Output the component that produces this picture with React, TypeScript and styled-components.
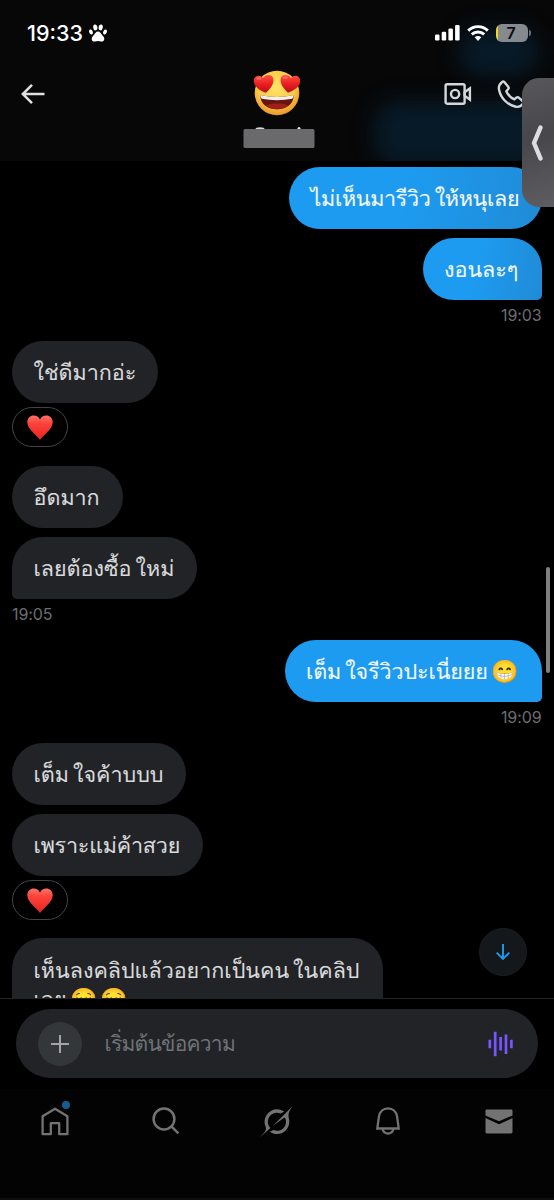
import React from "react";
import styled, { createGlobalStyle } from "styled-components";

const GlobalStyle = createGlobalStyle`
  * { box-sizing: border-box; }
  body { margin: 0; background: #000; }
  svg { display: block; flex: none; }
`;

const Screen = styled.div`
  position: relative;
  width: 554px;
  height: 1200px;
  display: flex;
  flex-direction: column;
  overflow: hidden;
  background: #000;
  color: #fff;
  font-family: Inter, "Liberation Sans", sans-serif;
`;

const Header = styled.header`
  position: relative;
  height: 161px;
  flex: none;
  background: #070708;
  overflow: hidden;
`;

const Glow = styled.div<{ $x: number; $y: number; $w: number; $h: number }>`
  position: absolute;
  left: ${(p) => p.$x}px;
  top: ${(p) => p.$y}px;
  width: ${(p) => p.$w}px;
  height: ${(p) => p.$h}px;
  border-radius: 24px;
  background: #071a27;
  filter: blur(10px);
`;

const StatusBar = styled.div`
  position: relative;
  display: flex;
  align-items: center;
  justify-content: space-between;
  height: 66px;
  padding: 0 23px 0 27px;
`;

const StatusGroup = styled.div<{ $gap: number }>`
  display: flex;
  align-items: center;
  gap: ${(p) => p.$gap}px;
`;

const Clock = styled.span`
  font-size: 21.5px;
  font-weight: 550;
  line-height: 26px;
`;

const Battery = styled.div`
  display: flex;
  align-items: center;
  gap: 1px;
`;

const BatteryBody = styled.div`
  width: 32px;
  height: 18px;
  border-radius: 6px;
  background: linear-gradient(90deg, #f2d71b 2.5px, #858a8e 2.5px);
  color: #0a0d10;
  font-size: 16px;
  font-weight: 600;
  line-height: 18px;
  padding-right: 2px;
  text-align: center;
`;

const BatteryTip = styled.div`
  width: 2px;
  height: 6px;
  border-radius: 0 2px 2px 0;
  background: #6a7176;
`;

const TitleBar = styled.div`
  position: relative;
  display: grid;
  grid-template-columns: 1fr 72px 1fr;
  height: 90px;
`;

const BackArea = styled.div`
  padding: 17px 0 0 20px;
`;

const Contact = styled.div`
  display: flex;
  flex-direction: column;
  align-items: center;
  gap: 10px;
  padding-top: 4px;
`;

const HeaderActions = styled.div`
  display: flex;
  align-items: center;
  justify-content: flex-end;
  height: 30px;
  gap: 25px;
  margin-top: 13px;
  padding-right: 28px;
`;

const Thread = styled.main`
  flex: none;
  height: 837px;
  overflow: hidden;
  display: flex;
  flex-direction: column;
  padding: 5.5px 12.5px 0 12px;
`;

const Group = styled.section<{ $mine?: boolean; $after?: number }>`
  flex: none;
  display: flex;
  flex-direction: column;
  align-items: ${(p) => (p.$mine ? "flex-end" : "flex-start")};
  gap: 8.5px;
  margin-bottom: ${(p) => p.$after ?? 0}px;
`;

const Bubble = styled.div<{ $mine?: boolean; $tail?: boolean; $w: number; $ls?: number; $shade?: boolean }>`
  width: ${(p) => p.$w}px;
  min-height: 62.5px;
  padding: 17.5px 0 16px 21.5px;
  border-radius: 31px;
  ${(p) => p.$tail && (p.$mine ? "border-bottom-right-radius: 5px;" : "border-bottom-left-radius: 5px;")}
  background: ${(p) => (p.$mine ? (p.$shade ? "linear-gradient(100deg, #1d9bf0 45%, #208bd6)" : "#1d9bf0") : "#212327")};
  color: ${(p) => (p.$mine ? "#f3f8fc" : "#d9dadb")};
  font-family: Loma, "Noto Sans", sans-serif;
  font-size: 21.5px;
  line-height: 29px;
  letter-spacing: ${(p) => p.$ls ?? 0}px;
  -webkit-text-stroke: 0.1px currentColor;
  white-space: nowrap;
`;

const Spaced = styled.span`
  margin-left: 4px;
`;

const Emoji = styled.span`
  font-size: 22px;
  line-height: 20px;
  letter-spacing: 3.5px;
  margin-left: 3px;
`;

const Time = styled.time`
  margin-top: -2px;
  color: #6b6e72;
  font-size: 16px;
  line-height: 16px;
  letter-spacing: -0.1px;
`;

const Reaction = styled.div`
  display: flex;
  align-items: center;
  justify-content: center;
  width: 56px;
  height: 40px;
  margin-top: -5px;
  padding-top: 1px;
  border: 1px solid #424447;
  border-radius: 20px;
`;

const ComposerArea = styled.footer`
  flex: none;
  height: 91px;
  padding: 10px 16px 0;
  border-top: 1px solid #222325;
`;

const Composer = styled.div`
  display: flex;
  align-items: center;
  height: 69px;
  padding: 0 24px 0 21.5px;
  border-radius: 35px;
  background: #212327;
`;

const AddButton = styled.div`
  display: flex;
  align-items: center;
  justify-content: center;
  width: 44px;
  height: 44px;
  border-radius: 50%;
  background: #33373a;
`;

const Placeholder = styled.span`
  flex: 1;
  padding-left: 23px;
  color: #707377;
  font-family: Loma, "Noto Sans", sans-serif;
  font-size: 21px;
  letter-spacing: -0.75px;
  line-height: 31px;
`;

const NavBar = styled.nav`
  flex: 1;
  display: grid;
  grid-template-columns: repeat(5, 1fr);
  justify-items: center;
  align-items: start;
  padding-top: 16px;
  background: #030303;
  border-bottom: 2px solid #0e0e0e;
`;

const NavItem = styled.div`
  position: relative;
  display: flex;
  align-items: center;
  height: 32px;
`;

const UnreadDot = styled.i`
  position: absolute;
  top: -4px;
  right: -1px;
  width: 8px;
  height: 8px;
  border-radius: 50%;
  background: #145d90;
`;

const JumpButton = styled.div`
  position: absolute;
  left: 479px;
  top: 928px;
  width: 48px;
  height: 48px;
  display: flex;
  align-items: center;
  justify-content: center;
  border-radius: 50%;
  border: 1px solid #1b1e20;
  background: #15181a;
`;

const ScrollThumb = styled.div`
  position: absolute;
  left: 546px;
  top: 567px;
  width: 4px;
  height: 106px;
  border-radius: 2px;
  background: #7f7f7f;
`;

const SideHandle = styled.div`
  position: absolute;
  left: 522px;
  top: 78px;
  width: 32px;
  height: 129px;
  display: flex;
  align-items: center;
  padding-left: 8px;
  border-radius: 17px 0 0 17px;
  background: linear-gradient(165deg, #58585b, #47464a 45%, #5e5d61);
`;

const Paw = () => (
  <svg width="18" height="18" viewBox="0 0 18 18" fill="#fff">
    <ellipse cx="6.3" cy="3.4" rx="2.1" ry="3" transform="rotate(-8 6.3 3.4)" />
    <ellipse cx="11.7" cy="3.4" rx="2.1" ry="3" transform="rotate(8 11.7 3.4)" />
    <ellipse cx="2" cy="8" rx="1.8" ry="2.6" transform="rotate(-20 2 8)" />
    <ellipse cx="16" cy="8" rx="1.8" ry="2.6" transform="rotate(20 16 8)" />
    <path d="M9 7.4c2.1 0 3 1.9 4 3.400 1 1.400 2.400 2.200 2.300 4.200-.1 1.900-1.700 2.800-3.300 2.500-1-.2-1.900-.5-3-.5s-2 .3-3 .5c-1.600.3-3.200-.6-3.300-2.500-.1-2 1.300-2.800 2.300-4.200 1-1.500 1.900-3.400 4-3.400z" />
  </svg>
);

const Signal = () => (
  <svg width="25" height="16" viewBox="0 0 25 16" fill="#fff">
    <rect x="0" y="9.5" width="4.5" height="6" rx="1.2" />
    <rect x="6.7" y="6.8" width="4.5" height="8.7" rx="1.2" />
    <rect x="13.4" y="3.5" width="4.5" height="12" rx="1.2" />
    <rect x="20.1" y="0" width="4.5" height="15.5" rx="1.2" />
  </svg>
);

const Wifi = () => (
  <svg width="22" height="16" viewBox="0 0 22 16" fill="none" stroke="#fff" strokeWidth="2.9">
    <path d="M1.200 5.600C6.700.3 15.300.3 20.800 5.600" />
    <path d="M4.800 9.400c3.500-3.200 8.900-3.200 12.400 0" />
    <path d="M7.700 12.300c1.900-1.600 4.700-1.600 6.600 0L11 15.900z" fill="#fff" stroke="none" />
  </svg>
);

const BackArrow = () => (
  <svg width="26" height="22" viewBox="0 0 26 22" fill="none" stroke="#dfe0e1" strokeWidth="2.5">
    <path d="M12 1.800L2.800 11l9.200 9.200M3 11h21.500" />
  </svg>
);

const HeartEyes = () => (
  <svg width="48" height="47" viewBox="0 0 48 47">
    <defs>
      <radialGradient id="face" cx="48%" cy="38%" r="62%">
        <stop offset="0" stopColor="#ffe568" />
        <stop offset=".65" stopColor="#fdca45" />
        <stop offset="1" stopColor="#e9952a" />
      </radialGradient>
      <linearGradient id="eye" x1="0" y1="0" x2="0" y2="1">
        <stop offset="0" stopColor="#fb5144" />
        <stop offset=".5" stopColor="#ec1f23" />
        <stop offset="1" stopColor="#b70c16" />
      </linearGradient>
    </defs>
    <circle cx="24" cy="23" r="22.300" fill="url(#face)" />
    <path d="M7.500 25c10 2.600 23 2.600 33 0 .8 8.500-6.500 14.300-16.500 14.300S6.700 33.500 7.500 25z" fill="#68150f" />
    <path d="M13 35.500c5-2.600 17-2.600 22 0-3 2.600-6.500 3.800-11 3.800s-8-1.200-11-3.800z" fill="#9c2017" />
    <path d="M7.500 25c10 2.600 23 2.600 33 0 0 2-.4 2.900-1.300 3.700-9.500 1.900-21 1.900-30.400 0-.9-.8-1.300-1.700-1.300-3.700z" fill="#f2f0ec" />
    <path d="M13 22.800C6.500 20.500.8 16 .8 11 .8 5.800 6.800 3.800 10 8.200 12.500 3.800 19.800 4 20.400 9.300c.5 5-3.400 9.600-7.400 13.500z" fill="url(#eye)" />
    <path d="M35 22.800c6.500-2.300 12.200-6.800 12.200-11.800 0-5.200-6-7.200-9.200-2.800C35.500 3.800 28.200 4 27.600 9.300c-.5 5 3.400 9.600 7.400 13.500z" fill="url(#eye)" />
    <ellipse cx="5.800" cy="8.500" rx="2.600" ry="1.200" fill="#ff8a78" opacity=".6" />
    <ellipse cx="32.300" cy="7.700" rx="2.600" ry="1.200" fill="#ff8a78" opacity=".6" />
  </svg>
);

const NameBar = styled.div`
  padding-left: 3px;
`;

const NameCover = () => (
  <svg width="72" height="22" viewBox="0 0 72 22">
    <ellipse cx="17" cy="2" rx="4.500" ry="1.800" fill="#d8d8d8" />
    <circle cx="56" cy="1.500" r="1.500" fill="#e8e8e8" />
    <rect x=".5" y="2" width="71" height="19" rx="1.500" fill="#6a6a6d" />
  </svg>
);

const VideoIcon = () => (
  <svg width="28" height="24" viewBox="0 0 28 24" fill="none" stroke="#d4d8da" strokeWidth="2.400">
    <rect x="1.600" y="2.200" width="19" height="19.500" rx="1.500" />
    <circle cx="11.100" cy="12" r="4.100" />
    <path d="M20.600 10.300l5.300-4v11.400l-5.300-4z" />
  </svg>
);

const PhoneIcon = () => (
  <svg width="29" height="29" viewBox="0 0 29 29" fill="none" stroke="#d4d8da" strokeWidth="2.400" strokeLinejoin="round">
    <path d="M7.300 1.900c-.8-.5-1.700-.3-2.400.3C2.300 4.300 1.500 6.500 2 9.500c1.600 8.700 8.600 15.600 17 17.300 2.900.5 5-.4 7-3 .7-.9.700-1.800-.1-2.500l-4.100-3.600c-.8-.7-1.700-.7-2.500 0l-1.900 1.700c-3.800-1.700-6.600-4.500-8.100-8.100l1.800-2c.7-.8.8-1.700.1-2.500z" />
  </svg>
);

const Heart = () => (
  <svg width="26" height="25" viewBox="0 0 26 25">
    <defs>
      <linearGradient id="heart" x1="0" y1="0" x2="0" y2="1">
        <stop offset="0" stopColor="#ff7065" />
        <stop offset=".35" stopColor="#fb4239" />
        <stop offset="1" stopColor="#e8221f" />
      </linearGradient>
    </defs>
    <path d="M13 25C9.500 20 .3 14 .3 7.300.3 3.200 3.200.5 6.800.5c2.700 0 5 1.500 6.200 4 1.200-2.500 3.500-4 6.200-4 3.600 0 6.500 2.700 6.500 6.800C25.700 14 16.500 20 13 25z" fill="url(#heart)" />
  </svg>
);

const PlusIcon = () => (
  <svg width="20" height="20" viewBox="0 0 20 20" stroke="#a3a5a8" strokeWidth="2">
    <path d="M10 1v18M1 10h18" />
  </svg>
);

const WaveIcon = () => (
  <svg width="26" height="26" viewBox="0 0 26 26" stroke="#7856ff" strokeWidth="2.700">
    <path d="M1.800 8.800v8.400M7.200 .7v24.600M12.600 6v13.500M18 3.500v19.500M23.400 8.800v8.400" />
  </svg>
);

const DownArrow = () => (
  <svg width="16" height="18" viewBox="0 0 16 18" fill="none" stroke="#1d9bf0" strokeWidth="1.900">
    <path d="M8 1v15M1.700 9.700L8 16l6.300-6.300" />
  </svg>
);

const HomeIcon = () => (
  <svg width="28" height="29" viewBox="0 0 28 29" fill="none" stroke="#737373" strokeWidth="2.300" strokeLinejoin="round">
    <path d="M1.600 27.200V9.300L14 1.700l12.400 7.600v17.900h-8.200v-11h-8.400v11z" />
  </svg>
);

const SearchIcon = () => (
  <svg width="28" height="28" viewBox="0 0 28 28" fill="none" stroke="#737373" strokeWidth="2.500">
    <circle cx="12" cy="12" r="10.400" />
    <path d="M19.400 19.400l7 7" />
  </svg>
);

const OrbitIcon = () => (
  <svg width="33" height="33" viewBox="0 0 24 24" fill="#737373">
    <path d="M9.270 15.290l7.978-5.897c.391-.29.95-.177 1.137.272.98 2.369.542 5.215-1.410 7.169-1.951 1.954-4.667 2.382-7.149 1.406l-2.711 1.257c3.889 2.661 8.611 2.003 11.562-.953 2.341-2.344 3.066-5.539 2.388-8.420l.006.007c-.983-4.232.242-5.924 2.750-9.383l.179-.248-3.301 3.305v-.01z" />
    <path d="M7.623 16.723c-2.792-2.670-2.310-6.801.071-9.184 1.761-1.763 4.647-2.483 7.166-1.425l2.705-1.250a7.808 7.808 0 00-1.829-1A8.975 8.975 0 005.984 5.830c-2.533 2.536-3.330 6.436-1.962 9.764 1.022 2.487-.653 4.246-2.340 6.022-.599.630-1.199 1.259-1.682 1.925z" />
  </svg>
);

const BellIcon = () => (
  <svg width="26" height="28" viewBox="0 0 26 28" fill="none" stroke="#737373" strokeWidth="2.300">
    <path d="M2.300 21.500L3.900 9.600c.8-5 4.400-8.300 9.100-8.300s8.300 3.300 9.100 8.300l1.600 11.900z" />
    <path d="M7.600 22c.8 2.900 2.800 4.600 5.400 4.600s4.600-1.700 5.400-4.600" />
  </svg>
);

const MailIcon = () => (
  <svg width="28" height="25" viewBox="0 0 28 25" fill="#737373">
    <path d="M.5 6.400V1.900C.5 1 1 .5 1.900.5h24.200c.9 0 1.400.5 1.400 1.400v4.500L14 12.300z" />
    <path d="M.5 9.100L14 15.200l13.500-6.100V23c0 .9-.5 1.400-1.400 1.400H1.900C1 24.400.5 23.900.5 23z" />
  </svg>
);

const HandleChevron = () => (
  <svg width="14" height="38" viewBox="0 0 14 38" fill="none" stroke="#dddce2" strokeWidth="4.500" strokeLinecap="round" strokeLinejoin="round">
    <path d="M10.500 3.500L4 19l6.500 15.500" />
  </svg>
);

export default function App() {
  return (
    <>
      <GlobalStyle />
      <Screen>
        <Header>
          <Glow $x={458} $y={28} $w={82} $h={48} />
          <Glow $x={374} $y={101} $w={190} $h={66} />
          <StatusBar>
            <StatusGroup $gap={6}>
              <Clock>19:33</Clock>
              <Paw />
            </StatusGroup>
            <StatusGroup $gap={7}>
              <Signal />
              <Wifi />
              <Battery>
                <BatteryBody>7</BatteryBody>
                <BatteryTip />
              </Battery>
            </StatusGroup>
          </StatusBar>
          <TitleBar>
            <BackArea>
              <BackArrow />
            </BackArea>
            <Contact>
              <HeartEyes />
              <NameBar><NameCover /></NameBar>
            </Contact>
            <HeaderActions>
              <VideoIcon />
              <PhoneIcon />
            </HeaderActions>
          </TitleBar>
        </Header>

        <Thread>
          <Group $mine $after={18}>
            <Bubble $mine $shade $w={252.5} $ls={-0.3}>ไม่เห็นมารีวิว<Spaced>ให้หนุเลย</Spaced></Bubble>
            <Bubble $mine $shade $tail $w={119}>งอนละๆ</Bubble>
            <Time>19:03</Time>
          </Group>
          <Group $after={19}>
            <Bubble $w={146}>ใช่ดีมากอ่ะ</Bubble>
            <Reaction><Heart /></Reaction>
          </Group>
          <Group $after={18}>
            <Bubble $w={111}>อึดมาก</Bubble>
            <Bubble $tail $w={185}>เลยต้องซื้อ<Spaced>ใหม่</Spaced></Bubble>
            <Time>19:05</Time>
          </Group>
          <Group $mine $after={18}>
            <Bubble $mine $tail $w={257} $ls={-0.1}>เต็ม<Spaced>ใจรีวิวปะเนี่ยยย</Spaced><Emoji>😁</Emoji></Bubble>
            <Time>19:09</Time>
          </Group>
          <Group $after={18.5}>
            <Bubble $w={174}>เต็ม<Spaced>ใจค้าบบบ</Spaced></Bubble>
            <Bubble $w={191} $ls={-0.2}>เพราะแม่ค้าสวย</Bubble>
            <Reaction><Heart /></Reaction>
          </Group>
          <Group>
            <Bubble $w={371}>
              เห็นลงคลิปแล้วอยากเป็นคน<Spaced>ในคลิป</Spaced>
              <br />
              เลย<Emoji>😌😌</Emoji>
            </Bubble>
          </Group>
        </Thread>

        <ComposerArea>
          <Composer>
            <AddButton><PlusIcon /></AddButton>
            <Placeholder>เริ่มต้นข้อความ</Placeholder>
            <WaveIcon />
          </Composer>
        </ComposerArea>
        <NavBar>
          <NavItem><HomeIcon /><UnreadDot /></NavItem>
          <NavItem><SearchIcon /></NavItem>
          <NavItem><OrbitIcon /></NavItem>
          <NavItem><BellIcon /></NavItem>
          <NavItem><MailIcon /></NavItem>
        </NavBar>

        <JumpButton><DownArrow /></JumpButton>
        <ScrollThumb />
        <SideHandle><HandleChevron /></SideHandle>
      </Screen>
    </>
  );
}
